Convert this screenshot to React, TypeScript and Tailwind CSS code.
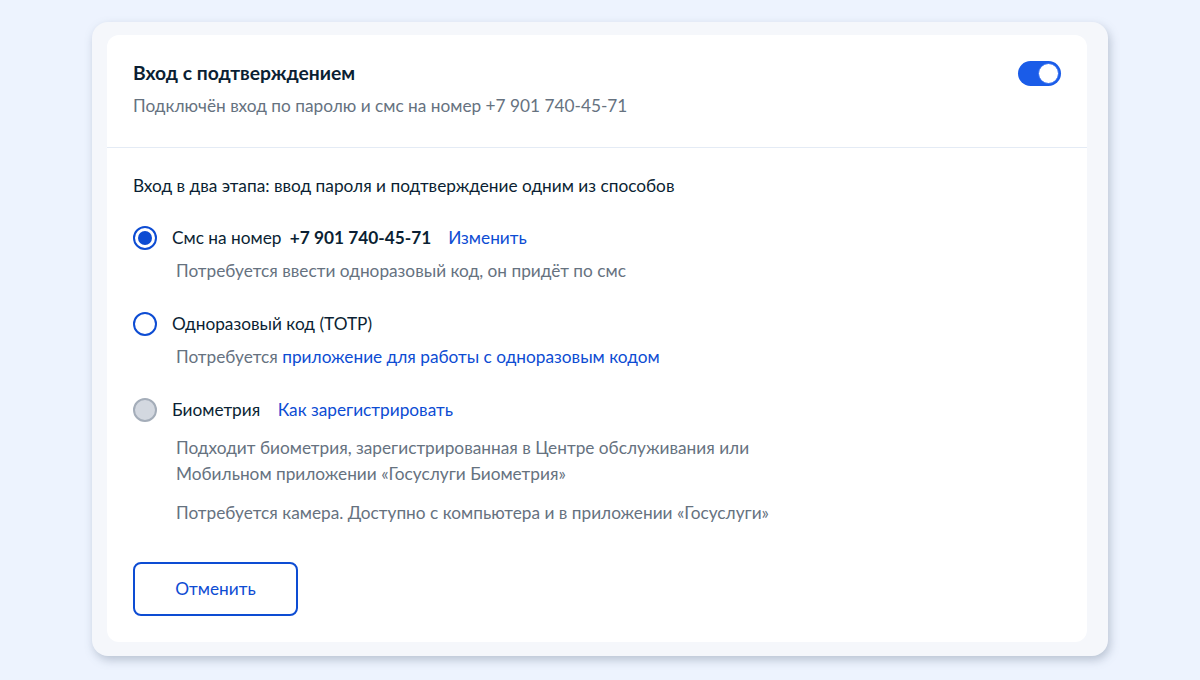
const font = { fontFamily: "Lato, 'Noto Sans', sans-serif" };

function Radio({ state }: { state: "on" | "off" | "disabled" }) {
  if (state === "disabled") {
    return <span className="box-border block h-6 w-6 shrink-0 rounded-full border-2 border-[#a4adb9] bg-[#d3d8e0]" />;
  }
  return (
    <span className="box-border flex h-6 w-6 shrink-0 items-center justify-center rounded-full border-2 border-[#0d4cd3] bg-white">
      {state === "on" ? <span className="block h-[14px] w-[14px] rounded-full bg-[#0d4cd3]" /> : null}
    </span>
  );
}

export default function App() {
  return (
    <div className="h-[680px] w-[1200px] bg-[#edf3fe] pt-[22px]" style={font}>
      <div className="mx-auto w-[1016px] rounded-2xl bg-[#f5f7fb] pb-[14px] pl-[15px] pr-[21px] pt-[13px] shadow-[2px_4px_10px_rgba(90,105,130,0.35)]">
        <div className="rounded-xl bg-white">
          <div className="flex items-start justify-between border-b border-[#e4ebf5] pb-[29px] pl-[26px] pr-[26px] pt-[26px]">
            <div>
              <h1 className="text-[19.3px] font-bold leading-6 text-[#0b1f33]">Вход с подтверждением</h1>
              <p className="mt-[9px] text-[17.25px] leading-6 text-[#66727f]">
                Подключён вход по паролю и смс на номер +7 901 740-45-71
              </p>
            </div>
            <div className="flex h-[25px] w-[43px] items-center justify-end rounded-full bg-[#1a5ce8] pr-[2px]">
              <span className="block h-[21px] w-[21px] rounded-full border border-[#2f6cf0] bg-white" />
            </div>
          </div>

          <div className="pb-[26px] pl-[26px] pr-[26px] pt-[26px]">
            <p className="text-[17.25px] leading-6 text-[#0b1f33]">
              Вход в два этапа: ввод пароля и подтверждение одним из способов
            </p>

            <div className="mt-[28px]">
              <div className="flex items-center gap-[15px]">
                <Radio state="on" />
                <div className="text-[17.25px] leading-6 text-[#0b1f33]">
                  Смс на номер <span className="ml-[4px] font-bold">+7 901 740-45-71</span>
                  <span className="ml-[17px] text-[#0d4cd3]">Изменить</span>
                </div>
              </div>
              <p className="ml-[43px] mt-[8px] text-[17.25px] leading-[26px] text-[#66727f]">
                Потребуется ввести одноразовый код, он придёт по смс
              </p>
            </div>

            <div className="mt-[28px]">
              <div className="flex items-center gap-[15px]">
                <Radio state="off" />
                <div className="text-[17.25px] leading-6 text-[#0b1f33]">Одноразовый код (TOTP)</div>
              </div>
              <p className="ml-[43px] mt-[8px] text-[17.25px] leading-[26px] text-[#66727f]">
                Потребуется <span className="text-[#0d4cd3]">приложение для работы с одноразовым кодом</span>
              </p>
            </div>

            <div className="mt-[28px]">
              <div className="flex items-center gap-[15px]">
                <Radio state="disabled" />
                <div className="text-[17.25px] leading-6 text-[#0b1f33]">
                  Биометрия <span className="ml-[13px] text-[#0d4cd3]">Как зарегистрировать</span>
                </div>
              </div>
              <p className="ml-[43px] mt-[13px] text-[17.25px] leading-[26px] text-[#66727f]">
                Подходит биометрия, зарегистрированная в Центре обслуживания или
                <br />
                Мобильном приложении «Госуслуги Биометрия»
              </p>
              <p className="ml-[43px] mt-[13px] text-[17.25px] leading-[26px] text-[#66727f]">
                Потребуется камера. Доступно с компьютера и в приложении «Госуслуги»
              </p>
            </div>

            <button className="mt-[36px] h-[54px] w-[165px] rounded-lg border-2 border-[#0d4cd3] bg-white text-[17.25px] text-[#0d4cd3]">
              Отменить
            </button>
          </div>
        </div>
      </div>
    </div>
  );
}
